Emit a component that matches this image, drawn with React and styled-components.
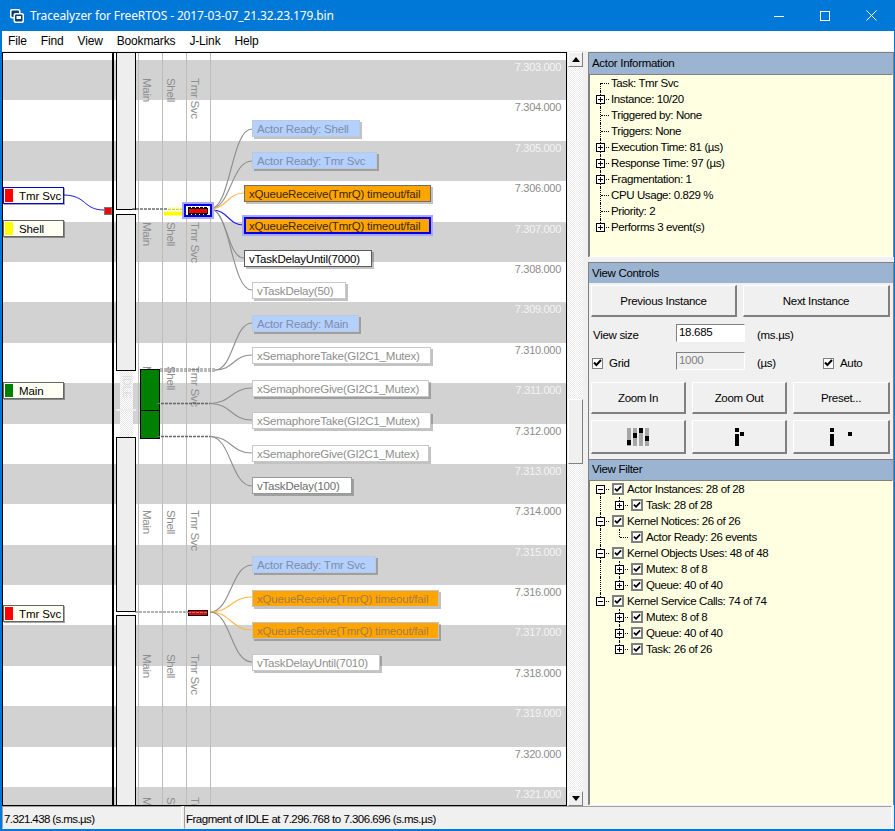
import React from "react";
import styled, { createGlobalStyle } from "styled-components";

const ORIGIN_X = 3;
const ORIGIN_Y = 53;
const UI = '"Liberation Sans", Arial, sans-serif';
const TEXT = `font: 11.5px ${UI}; letter-spacing: -.3px;`;

const Global = createGlobalStyle`
  html, body { margin: 0; padding: 0; background: #0078d7; }
  * { box-sizing: border-box; }
`;

const Window = styled.div`
  width: 895px; height: 831px; overflow: hidden;
  display: flex; flex-direction: column;
  background: #f0f0f0;
  border-left: 2px solid #0078d7; border-right: 1px solid #0078d7; border-bottom: 2px solid #0078d7;
  ${TEXT} color: #000;
`;
const TitleBar = styled.div`
  height: 31px; flex: none; margin-left: -2px; padding-left: 10px;
  background: #0078d7; color: #fff;
  display: flex; align-items: center; gap: 6px;
  font: 12px "Noto Sans", sans-serif; letter-spacing: -.13px;
`;
const TitleText = styled.span` flex: 1; `;
const WinControls = styled.div` display: flex; height: 31px; `;
const WinBtn = styled.div`
  width: 46px; height: 31px; display: flex; align-items: center; justify-content: center;
`;
const MenuBar = styled.div`
  height: 20px; flex: none; background: #fff; display: flex; padding-left: 7px; gap: 14px; align-items: center;
  font: 12px ${UI}; letter-spacing: -.15px; margin-left: -1px;
`;
const Main = styled.div`
  flex: 1; min-height: 0; display: flex; margin-top: 1px; padding-right: 1px;
`;
const Trace = styled.div`
  position: relative; width: 565px; height: 754px; flex: none;
  border: 1px solid #000; background: #fff; overflow: hidden;
`;
const Stub = styled.div` height: 7px; `;
const Band = styled.div`
  height: 40.4px; display: flex; justify-content: flex-end; padding: 1px 5px 0 0;
  font: 11px/13px ${UI};
  background: ${p => (p.$gray ? "#d2d2d2" : "#fff")};
  color: ${p => (p.$gray ? "#f4f4f4" : "#8c8c8c")};
`;
const Canvas = styled.svg`
  position: absolute; left: 0; top: 0; width: 563px; height: 752px; pointer-events: none;
`;
const Lane = styled.div`
  position: absolute; top: 0; bottom: 0; width: 1px; left: ${p => p.$x - ORIGIN_X}px; background: #bcbcbc;
`;
const DoubleRule = styled.div`
  position: absolute; top: 0; bottom: 0; left: 109px; width: 2px; background: #000;
`;
const Idle = styled.div`
  position: absolute; left: 113px; width: 20px; background: #eee;
  top: ${p => p.$top - ORIGIN_Y}px; height: ${p => p.$h}px;
  border: 1px solid #000; ${p => p.$openTop && "border-top: 0;"} ${p => p.$openBottom && "border-bottom: 0;"}
`;
const FadedIdle = styled.div`
  position: absolute; left: 117px; width: 13px; top: 318px; height: 66px;
  background: conic-gradient(#e6e6e6 25%, #fff 0 50%, #e6e6e6 0 75%, #fff 0) 0 0 / 2px 2px;
  color: #dcdcdc; font: 11px ${UI}; writing-mode: vertical-rl; padding: 4px 0 0 0;
`;
const FadedTick = styled.div`
  position: absolute; left: 113px; width: 20px; top: 356px; height: 2px; background: #eee;
`;
const LaneName = styled.div`
  position: absolute; writing-mode: vertical-rl; white-space: nowrap; color: #8e8e8e;
  font: 11.5px/14px ${UI}; left: ${p => p.$x - ORIGIN_X - 7}px; top: ${p => p.$y - ORIGIN_Y}px;
`;
const GreenBlock = styled.div`
  position: absolute; left: 137px; width: 20px; background: #008000; border: 1px solid #000;
  top: ${p => p.$top - ORIGIN_Y}px; height: ${p => p.$h}px;
`;
const ActorTag = styled.div`
  position: absolute; left: 0; width: 61px; height: 17px; display: flex; align-items: center;
  top: ${p => p.$y - ORIGIN_Y}px; padding-left: 1px; gap: 6px; white-space: nowrap;
  background: #fffff4; font: 11.5px ${UI}; letter-spacing: -.1px;
  border: 1px solid ${p => (p.$active ? "#0000e0" : "#666")};
  box-shadow: 1px 1px 0 rgba(0, 0, 0, .35);
`;
const Swatch = styled.span`
  width: 8px; height: 13px; flex: none; background: ${p => p.$color};
`;
const kinds = {
  ready: "background:#b4d0ff;color:#7f8da5;border-color:#bcc8dc;",
  fail: "background:#ffa500;color:#3a2500;border:1px solid #6e6e6e;",
  failSel: "background:#ffa500;color:#3a2500;border:2px solid #0000e6;outline:2px solid #a8a8ff;box-shadow:none;padding-left:3px;",
  failFaded: "background:#ffa500;color:#a37c4f;border-color:#c4c4c4;",
  call: "background:#fff;color:#000;border-color:#5a5a5a;",
  mid: "background:#fff;color:#6e6e6e;border-color:#999;",
  faded: "background:#fff;color:#8e8e8e;border-color:#c8c8c8;",
};
const EventNode = styled.div`
  position: absolute; white-space: nowrap; display: flex; align-items: center; padding-left: 4px;
  left: ${p => p.$x - ORIGIN_X}px; top: ${p => p.$y - ORIGIN_Y}px;
  width: ${p => p.$w}px; height: 17px; font: 11.5px ${UI}; letter-spacing: -.2px;
  border: 1px solid; box-shadow: 2px 2px 0 rgba(0, 0, 0, .24);
  ${p => kinds[p.$kind]}
`;

const Scrollbar = styled.div`
  width: 15px; height: 754px; flex: none; margin-left: 1px; display: flex; flex-direction: column;
  background: conic-gradient(#ececec 25%, #fff 0 50%, #ececec 0 75%, #fff 0) 0 0 / 2px 2px;
`;
const ScrollBtn = styled.div`
  height: 15px; flex: none; background: #f0f0f0; display: flex; align-items: center; justify-content: center;
  border: 1px solid; border-color: #fff #808080 #808080 #fff;
`;
const TrackTop = styled.div` height: 332px; flex: none; `;
const Thumb = styled.div`
  height: 65px; flex: none; background: #f0f0f0; border: 1px solid; border-color: #fff #808080 #808080 #fff;
`;
const TrackRest = styled.div` flex: 1; `;

const Side = styled.div`
  width: 306px; flex: none; margin-left: 5px; display: flex; flex-direction: column;
`;
const Panel = styled.section`
  display: flex; flex-direction: column; flex: none; height: ${p => p.$h}px; background: #f0f0f0;
  border: 1px solid #808080; border-bottom: 0; margin-bottom: ${p => p.$gap ?? 0}px;
`;
const PanelTitle = styled.div`
  height: ${p => p.$h}px; flex: none; background: #9bb4d2; padding: ${p => p.$pt}px 0 0 3px; ${TEXT} line-height: 16px;
`;
const Tree = styled.div`
  flex: 1; background: #ffffe1; border: 1px solid; border-color: #808080 #fff #fff #808080; overflow: hidden;
  font: 11.5px/16px ${UI}; letter-spacing: -.4px;
`;
const Row = styled.div`
  position: relative; height: 16px; display: flex; align-items: center; white-space: nowrap;
  padding-left: ${p => p.$indent}px;
`;
const VGuide = styled.i`
  position: absolute; left: ${p => p.$x}px; width: 0; border-left: 1px dotted #000;
  top: ${p => (p.$part === "start" ? 8 : 0)}px;
  height: ${p => (p.$part === "full" ? 16 : 8)}px;
`;
const HGuide = styled.i`
  position: absolute; left: ${p => p.$x}px; width: ${p => p.$w}px; top: 8px; height: 0; border-top: 1px dotted #000;
`;
const Expander = styled.span`
  position: relative; width: 9px; height: 9px; flex: none; background: #fff; border: 1px solid #000;
  &::before { content: ""; position: absolute; left: 1px; right: 1px; top: 3px; height: 1px; background: #000; }
  &::after { content: ${p => (p.$open ? "none" : '""')}; position: absolute; top: 1px; bottom: 1px; left: 3px; width: 1px; background: #000; }
`;
const ExpanderGap = styled.span` width: 9px; height: 9px; flex: none; `;
const Label = styled.span` margin-left: ${p => p.$m}px; position: relative; `;
const CheckBox = styled.span`
  width: ${p => p.$size}px; height: ${p => p.$size}px; flex: none; margin-left: ${p => p.$m ?? 0}px; position: relative;
  background: #fff; border: ${p => p.$bw}px solid #808080;
  display: flex; align-items: center; justify-content: center;
`;
const ControlBody = styled.div`
  flex: 1; padding: 2px 2px 0 2px; display: flex; flex-direction: column;
`;
const BtnRow = styled.div`
  display: flex; gap: 6px; height: ${p => p.$h}px; margin-top: ${p => p.$mt}px;
`;
const Button = styled.div`
  width: ${p => p.$w}px; flex: none; display: flex; align-items: center; justify-content: center;
  background: #f0f0f0; ${TEXT}
  border: solid; border-width: 1px 2px 2px 1px; border-color: #fff #808080 #808080 #fff;
`;
const FieldRow = styled.div`
  display: flex; align-items: center; height: 18px; margin-top: ${p => p.$mt}px; ${TEXT} position: relative;
`;
const Aside = styled.div`
  display: flex; align-items: center; margin-top: 4px;
`;
const FieldLabel = styled.span` width: ${p => p.$w}px; flex: none; padding-left: ${p => p.$pl ?? 0}px; `;
const Input = styled.input`
  width: 69px; height: 18px; flex: none; padding: 0 0 2px 2px; margin: 0; outline: 0;
  ${TEXT} background: ${p => (p.disabled ? "#f0f0f0" : "#fff")}; color: ${p => (p.disabled ? "#808080" : "#000")};
  border: 1px solid; border-color: #808080 #fff #fff #808080;
`;
const Unit = styled.span` margin-left: 12px; width: ${p => p.$w}px; flex: none; `;

function Check({ size = 11, bw = 1, m }) {
  return (
    <CheckBox $size={size} $bw={bw} $m={m}>
      <svg width="9" height="8" viewBox="0 0 9 8"><path d="M1 3.5 L3.4 6 L8 1" fill="none" stroke="#000" strokeWidth="2" /></svg>
    </CheckBox>
  );
}

const curve = (x0, y0, x1, y1) => {
  const m = (x0 + x1) / 2;
  return `M${x0 - ORIGIN_X} ${y0 - ORIGIN_Y} C${m - ORIGIN_X} ${y0 - ORIGIN_Y} ${m - ORIGIN_X} ${y1 - ORIGIN_Y} ${x1 - ORIGIN_X} ${y1 - ORIGIN_Y}`;
};
const GRAY = "#8e8e8e";
const ORANGE = "#ffb847";
const curves = [
  [210, 209, 252, 129, GRAY], [210, 209, 252, 161, GRAY], [210, 209, 244, 193, ORANGE], [212, 210, 244, 225, "#2020f0"],
  [210, 209, 244, 258, GRAY], [210, 209, 252, 290, GRAY],
  [215, 370, 252, 323, GRAY], [215, 370, 252, 355, GRAY], [210, 403.5, 252, 388, GRAY], [210, 403.5, 252, 420, GRAY],
  [210, 436.5, 252, 453, GRAY], [210, 436.5, 252, 486, GRAY],
  [210, 612, 252, 565, GRAY], [210, 612, 252, 597, ORANGE], [210, 612, 252, 630, ORANGE], [210, 612, 252, 662, GRAY],
];
const nodes = [
  ["ready", 252, 120, 108, "Actor Ready: Shell"],
  ["ready", 252, 152, 125, "Actor Ready: Tmr Svc"],
  ["fail", 244, 185, 187, "xQueueReceive(TmrQ) timeout/fail"],
  ["failSel", 244, 217, 187, "xQueueReceive(TmrQ) timeout/fail"],
  ["call", 244, 250, 128, "vTaskDelayUntil(7000)"],
  ["faded", 252, 282, 94, "vTaskDelay(50)"],
  ["ready", 252, 315, 107, "Actor Ready: Main"],
  ["faded", 252, 347, 179, "xSemaphoreTake(GI2C1_Mutex)"],
  ["faded", 252, 380, 177, "xSemaphoreGive(GI2C1_Mutex)"],
  ["faded", 252, 412, 179, "xSemaphoreTake(GI2C1_Mutex)"],
  ["faded", 252, 445, 177, "xSemaphoreGive(GI2C1_Mutex)"],
  ["mid", 252, 477, 100, "vTaskDelay(100)"],
  ["ready", 252, 556, 124, "Actor Ready: Tmr Svc"],
  ["failFaded", 252, 590, 187, "xQueueReceive(TmrQ) timeout/fail"],
  ["failFaded", 252, 622, 187, "xQueueReceive(TmrQ) timeout/fail"],
  ["faded", 252, 654, 128, "vTaskDelayUntil(7010)"],
];
const laneNames = [
  [147, 78, "Main"], [171, 78, "Shell"], [195, 78, "Tmr Svc"],
  [147, 222, "Main"], [171, 222, "Shell"], [195, 222, "Tmr Svc"],
  [147, 366, "Main"], [171, 366, "Shell"], [195, 366, "Tmr Svc"],
  [147, 510, "Main"], [171, 510, "Shell"], [195, 510, "Tmr Svc"],
  [147, 654, "Main"], [171, 654, "Shell"], [195, 654, "Tmr Svc"],
  [147, 797, "Main"], [171, 797, "Shell"], [195, 797, "Tmr Svc"],
];
const lanes = [138, 162, 186, 210];
const bands = Array.from({ length: 19 }, (_, i) => 303 + i);

const actorRows = [
  { t: "Task: Tmr Svc", v: "start" }, { t: "Instance: 10/20", e: 1, v: "full" }, { t: "Triggered by: None", v: "full" },
  { t: "Triggers: None", v: "full" }, { t: "Execution Time: 81 (µs)", e: 1, v: "full" }, { t: "Response Time: 97 (µs)", e: 1, v: "full" },
  { t: "Fragmentation: 1", e: 1, v: "full" }, { t: "CPU Usage: 0.829 %", v: "full" }, { t: "Priority: 2", v: "full" },
  { t: "Performs 3 event(s)", e: 1, v: "end" },
];
const filterRows = [
  { t: "Actor Instances: 28 of 28", l: 0, v0: "start" },
  { t: "Task: 28 of 28", l: 1, v0: "full", v1: "end", e: 1 },
  { t: "Kernel Notices: 26 of 26", l: 0, v0: "full" },
  { t: "Actor Ready: 26 events", l: 1, v0: "full", v1: "end" },
  { t: "Kernel Objects Uses: 48 of 48", l: 0, v0: "full" },
  { t: "Mutex: 8 of 8", l: 1, v0: "full", v1: "full", e: 1 },
  { t: "Queue: 40 of 40", l: 1, v0: "full", v1: "end", e: 1 },
  { t: "Kernel Service Calls: 74 of 74", l: 0, v0: "end" },
  { t: "Mutex: 8 of 8", l: 1, v1: "full", e: 1 },
  { t: "Queue: 40 of 40", l: 1, v1: "full", e: 1 },
  { t: "Task: 26 of 26", l: 1, v1: "end", e: 1 },
];

const BarsIcon = () => (
  <svg width="22" height="18" viewBox="0 0 22 18">
    {[0, 6, 12, 18].map(x => <rect key={x} x={x} y="0" width="4" height="18" fill="#a6a6a6" />)}
    <rect x="0" y="12" width="4" height="5" fill="#000" />
    <rect x="6" y="5" width="4" height="5" fill="#000" />
    <rect x="12" y="0" width="4" height="5" fill="#000" />
    <rect x="18" y="8" width="4" height="5" fill="#000" />
  </svg>
);
const StepIcon = () => (
  <svg width="9" height="18" viewBox="0 0 9 18">
    <rect x="0" y="0" width="4" height="4" fill="#000" /><rect x="0" y="6" width="4" height="12" fill="#000" />
    <rect x="5" y="4" width="4" height="4" fill="#000" />
  </svg>
);
const FarIcon = () => (
  <svg width="22" height="18" viewBox="0 0 22 18">
    <rect x="0" y="0" width="4" height="4" fill="#000" /><rect x="0" y="6" width="4" height="12" fill="#000" />
    <rect x="18" y="4" width="4" height="4" fill="#000" />
  </svg>
);

const StatusBar = styled.div`
  height: 23px; flex: none; display: flex; margin-top: 2px; font: 11.5px ${UI};
`;
const StatusCell = styled.div`
  width: ${p => p.$w}px; flex: ${p => (p.$w ? "none" : 1)}; padding: 5px 0 0 1px; margin-right: 2px; line-height: 15px;
  letter-spacing: ${p => p.$ls}px;
  border: 1px solid; border-color: #a0a0a0 #fff transparent #a0a0a0;
`;

export default function App() {
  const svgY = y => y - ORIGIN_Y;
  const svgX = x => x - ORIGIN_X;
  return (
    <Window>
      <Global />
      <TitleBar>
        <svg width="14" height="14" viewBox="0 0 14 14">
          <rect x="0" y="0" width="10.5" height="9.5" rx="2" fill="#fff" />
          <rect x="1.5" y="1.5" width="7.5" height="6.5" rx="1" fill="#0b3d70" />
          <rect x="3.5" y="4" width="10.5" height="10" rx="2" fill="#fff" />
          <rect x="5" y="5.5" width="7.5" height="7" rx="1" fill="#0b3d70" />
          <rect x="6.5" y="7" width="4.5" height="3" fill="#fff" />
        </svg>
        <TitleText>Tracealyzer for FreeRTOS - 2017-03-07_21.32.23.179.bin</TitleText>
        <WinControls>
          <WinBtn><svg width="10" height="10" viewBox="0 0 10 10"><path d="M0 5.5H10" stroke="#fff" /></svg></WinBtn>
          <WinBtn><svg width="10" height="10" viewBox="0 0 10 10"><rect x=".5" y=".5" width="9" height="9" fill="none" stroke="#fff" /></svg></WinBtn>
          <WinBtn><svg width="11" height="11" viewBox="0 0 11 11"><path d="M.5 .5L10.5 10.5M10.5 .5L.5 10.5" stroke="#fff" /></svg></WinBtn>
        </WinControls>
      </TitleBar>
      <MenuBar>
        {["File", "Find", "View", "Bookmarks", "J-Link", "Help"].map(m => <span key={m}>{m}</span>)}
      </MenuBar>
      <Main>
        <Trace>
          <Stub />
          {bands.map((n, i) => (
            <Band key={n} $gray={i % 2 === 0}>7.{n}.000</Band>
          ))}
          {lanes.map(x => <Lane key={x} $x={x} />)}
          <DoubleRule />
          <Idle $top={52} $h={158} $openTop />
          <Idle $top={214} $h={157} />
          <FadedIdle>IDLE</FadedIdle>
          <FadedTick />
          <Idle $top={437} $h={175} />
          <Idle $top={615} $h={200} $openBottom />
          {laneNames.map(([x, y, t], i) => <LaneName key={i} $x={x} $y={y}>{t}</LaneName>)}
          <GreenBlock $top={369} $h={42} />
          <GreenBlock $top={410} $h={29} />
          <Canvas viewBox="0 0 563 752">
            <path d={`M60 ${svgY(195)} C84 ${svgY(195)} 80 ${svgY(210)} 101 ${svgY(210)}`} fill="none" stroke="#1a1ae0" />
            <line x1={svgX(132)} x2={svgX(184)} y1={svgY(209)} y2={svgY(209)} stroke="#6c6c6c" strokeWidth="1.5" strokeDasharray="3 1" />
            <line x1={svgX(160)} x2={svgX(215)} y1={svgY(369)} y2={svgY(369)} stroke="#777" strokeDasharray="3 1" />
            <line x1={svgX(160)} x2={svgX(215)} y1={svgY(371)} y2={svgY(371)} stroke="#777" strokeDasharray="3 1" />
            <line x1={svgX(157)} x2={svgX(210)} y1={svgY(403.5)} y2={svgY(403.5)} stroke="#666" strokeWidth="1.5" strokeDasharray="3 1" />
            <line x1={svgX(157)} x2={svgX(210)} y1={svgY(436.5)} y2={svgY(436.5)} stroke="#666" strokeWidth="1.5" strokeDasharray="3 1" />
            <line x1={svgX(135)} x2={svgX(188)} y1={svgY(612)} y2={svgY(612)} stroke="#666" strokeDasharray="3 1" />
            <rect x={svgX(104.5)} y={svgY(207.5)} width="7" height="7" fill="#f00" stroke="#777" />
            <rect x={svgX(164)} y={svgY(211.5)} width="20" height="4" fill="#ffff00" />
            <line x1={svgX(168)} x2={svgX(184)} y1={svgY(208.5)} y2={svgY(208.5)} stroke="#ffff60" strokeWidth="2" strokeDasharray="3 1" />
            {curves.map(([a, b, c, d, col], i) => <path key={i} d={curve(a, b, c, d)} fill="none" stroke={col} strokeWidth="1.1" />)}
            <rect x={svgX(182)} y={svgY(202)} width="32" height="17" fill="#a8a8ff" />
            <rect x={svgX(185)} y={svgY(205)} width="26" height="11" fill="#fff" stroke="#0000e0" strokeWidth="2" />
            <rect x={svgX(188.5)} y={svgY(208.5)} width="19" height="5" fill="#f00000" stroke="#000" />
            <line x1={svgX(188)} x2={svgX(208)} y1={svgY(207.5)} y2={svgY(207.5)} stroke="#000" strokeDasharray="3 1" />
            <line x1={svgX(188)} x2={svgX(208)} y1={svgY(214.5)} y2={svgY(214.5)} stroke="#000" strokeDasharray="3 1" />
            <rect x={svgX(188.5)} y={svgY(610.5)} width="19" height="5" fill="#f00000" stroke="#000" />
            <line x1={svgX(188)} x2={svgX(208)} y1={svgY(612.5)} y2={svgY(612.5)} stroke="#888" strokeDasharray="3 1" />
          </Canvas>
          <ActorTag $y={187} $active><Swatch $color="#f00" />Tmr Svc</ActorTag>
          <ActorTag $y={220}><Swatch $color="#ff0" />Shell</ActorTag>
          <ActorTag $y={382}><Swatch $color="#008000" />Main</ActorTag>
          <ActorTag $y={605}><Swatch $color="#f00" />Tmr Svc</ActorTag>
          {nodes.map(([k, x, y, w, t], i) => <EventNode key={i} $kind={k} $x={x} $y={y} $w={w}>{t}</EventNode>)}
        </Trace>
        <Scrollbar>
          <ScrollBtn><svg width="8" height="5" viewBox="0 0 8 5"><path d="M4 0L8 5H0Z" /></svg></ScrollBtn>
          <TrackTop />
          <Thumb />
          <TrackRest />
          <ScrollBtn><svg width="8" height="5" viewBox="0 0 8 5"><path d="M0 0H8L4 5Z" /></svg></ScrollBtn>
        </Scrollbar>
        <Side>
          <Panel $h={205} $gap={5}>
            <PanelTitle $h={21} $pt={2}>Actor Information</PanelTitle>
            <Tree>
              {actorRows.map((r, i) => (
                <Row key={i} $indent={6}>
                  <VGuide $x={10} $part={r.v} />
                  <HGuide $x={11} $w={8} />
                  {r.e ? <Expander /> : <ExpanderGap />}
                  <Label $m={6}>{r.t}</Label>
                </Row>
              ))}
            </Tree>
          </Panel>
          <Panel $h={197}>
            <PanelTitle $h={20} $pt={2}>View Controls</PanelTitle>
            <ControlBody>
              <BtnRow $h={32} $mt={0}>
                <Button $w={146}>Previous Instance</Button>
                <Button $w={147}>Next Instance</Button>
              </BtnRow>
              <FieldRow $mt={7}>
                <Aside><FieldLabel $w={85} $pl={2}>View size</FieldLabel></Aside>
                <Input readOnly value="18.685" />
                <Aside><Unit $w={60}>(ms.µs)</Unit></Aside>
              </FieldRow>
              <FieldRow $mt={10}>
                <Aside>
                  <Check m={1} />
                  <FieldLabel $w={73} $pl={6}>Grid</FieldLabel>
                </Aside>
                <Input disabled readOnly value="1000" />
                <Aside>
                  <Unit $w={66}>(µs)</Unit>
                  <Check />
                  <Label $m={6}>Auto</Label>
                </Aside>
              </FieldRow>
              <BtnRow $h={32} $mt={12}>
                <Button $w={95}>Zoom In</Button>
                <Button $w={95}>Zoom Out</Button>
                <Button $w={97}>Preset...</Button>
              </BtnRow>
              <BtnRow $h={34} $mt={6}>
                <Button $w={95}><BarsIcon /></Button>
                <Button $w={95}><StepIcon /></Button>
                <Button $w={97}><FarIcon /></Button>
              </BtnRow>
            </ControlBody>
          </Panel>
          <Panel $h={346}>
            <PanelTitle $h={20} $pt={1}>View Filter</PanelTitle>
            <Tree>
              {filterRows.map((r, i) => (
                <Row key={i} $indent={r.l ? 25 : 6}>
                  {r.v0 && <VGuide $x={10} $part={r.v0} />}
                  {r.v1 && <VGuide $x={29} $part={r.v1} />}
                  <HGuide $x={r.l ? 30 : 11} $w={8} />
                  {r.l === 0 ? <Expander $open /> : r.e ? <Expander /> : <ExpanderGap />}
                  <Check size={12} bw={2} m={7} />
                  <Label $m={3}>{r.t}</Label>
                </Row>
              ))}
            </Tree>
          </Panel>
        </Side>
      </Main>
      <StatusBar>
        <StatusCell $w={180} $ls={-0.6}>7.321.438 (s.ms.µs)</StatusCell>
        <StatusCell $ls={-0.5}>Fragment of IDLE at 7.296.768 to 7.306.696 (s.ms.µs)</StatusCell>
      </StatusBar>
    </Window>
  );
}
